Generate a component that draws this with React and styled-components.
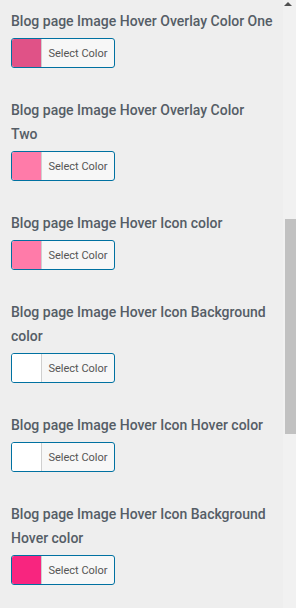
import React from 'react';
import styled, { createGlobalStyle } from 'styled-components';

const GlobalStyle = createGlobalStyle`
    html, body {
        margin: 0;
        padding: 0;
        background: #eeeeee;
    }
    * {
        box-sizing: border-box;
    }
`;

const FIELDS = [
    { label: 'Blog page Image Hover Overlay Color One', color: '#e05287' },
    { label: 'Blog page Image Hover Overlay Color Two', color: '#ff7ba9' },
    { label: 'Blog page Image Hover Icon color', color: '#ff7ba9' },
    { label: 'Blog page Image Hover Icon Background color', color: '#ffffff' },
    { label: 'Blog page Image Hover Icon Hover color', color: '#ffffff' },
    { label: 'Blog page Image Hover Icon Background Hover color', color: '#f8257f' }
];

const Screen = styled.div`
    display: flex;
    height: 608px;
    overflow: hidden;
    font-family: Roboto, "Liberation Sans", sans-serif;
`;

const Panel = styled.div`
    flex: 0 0 283px;
    padding: 9px 10px 0 11px;
    display: flex;
    flex-direction: column;
    gap: 30px;
`;

const Field = styled.div`
    display: flex;
    flex-direction: column;
    align-items: flex-start;
    gap: 5px;
`;

const Label = styled.div`
    font-size: 14px;
    line-height: 24px;
    font-weight: 500;
    color: #555d66;
`;

const ColorButton = styled.button`
    display: flex;
    align-items: stretch;
    width: 104px;
    height: 30px;
    padding: 0;
    border: 1px solid #0071a1;
    border-radius: 3px;
    background: #f7f7f7;
    overflow: hidden;
    cursor: pointer;
    font-family: inherit;
`;

const Swatch = styled.span`
    flex: 0 0 30px;
    background: ${(p) => p.$color};
    border-right: 1px solid #cfcfcf;
`;

const ButtonText = styled.span`
    flex: 1;
    display: flex;
    align-items: center;
    justify-content: center;
    font-size: 11px;
    color: #555555;
`;

const ScrollTrack = styled.div`
    flex: 0 0 13px;
    background: #f1f1f1;
    display: flex;
    flex-direction: column;
    align-items: flex-end;
`;

const ArrowUp = styled.div`
    width: 0;
    height: 0;
    margin: 2px 4px 0 0;
    border-left: 4px solid transparent;
    border-right: 4px solid transparent;
    border-bottom: 4px solid #505050;
`;

const Thumb = styled.div`
    width: 11px;
    height: 215px;
    margin-top: 213px;
    background: #c1c1c1;
`;

function ColorField({ label, color }) {
    return (
        <Field>
            <Label>{label}</Label>
            <ColorButton type="button">
                <Swatch $color={color} />
                <ButtonText>Select Color</ButtonText>
            </ColorButton>
        </Field>
    );
}

export default function App() {
    return (
        <>
            <GlobalStyle />
            <Screen>
                <Panel>
                    {FIELDS.map((f) => (
                        <ColorField key={f.label} {...f} />
                    ))}
                </Panel>
                <ScrollTrack>
                    <ArrowUp />
                    <Thumb />
                </ScrollTrack>
            </Screen>
        </>
    );
}
